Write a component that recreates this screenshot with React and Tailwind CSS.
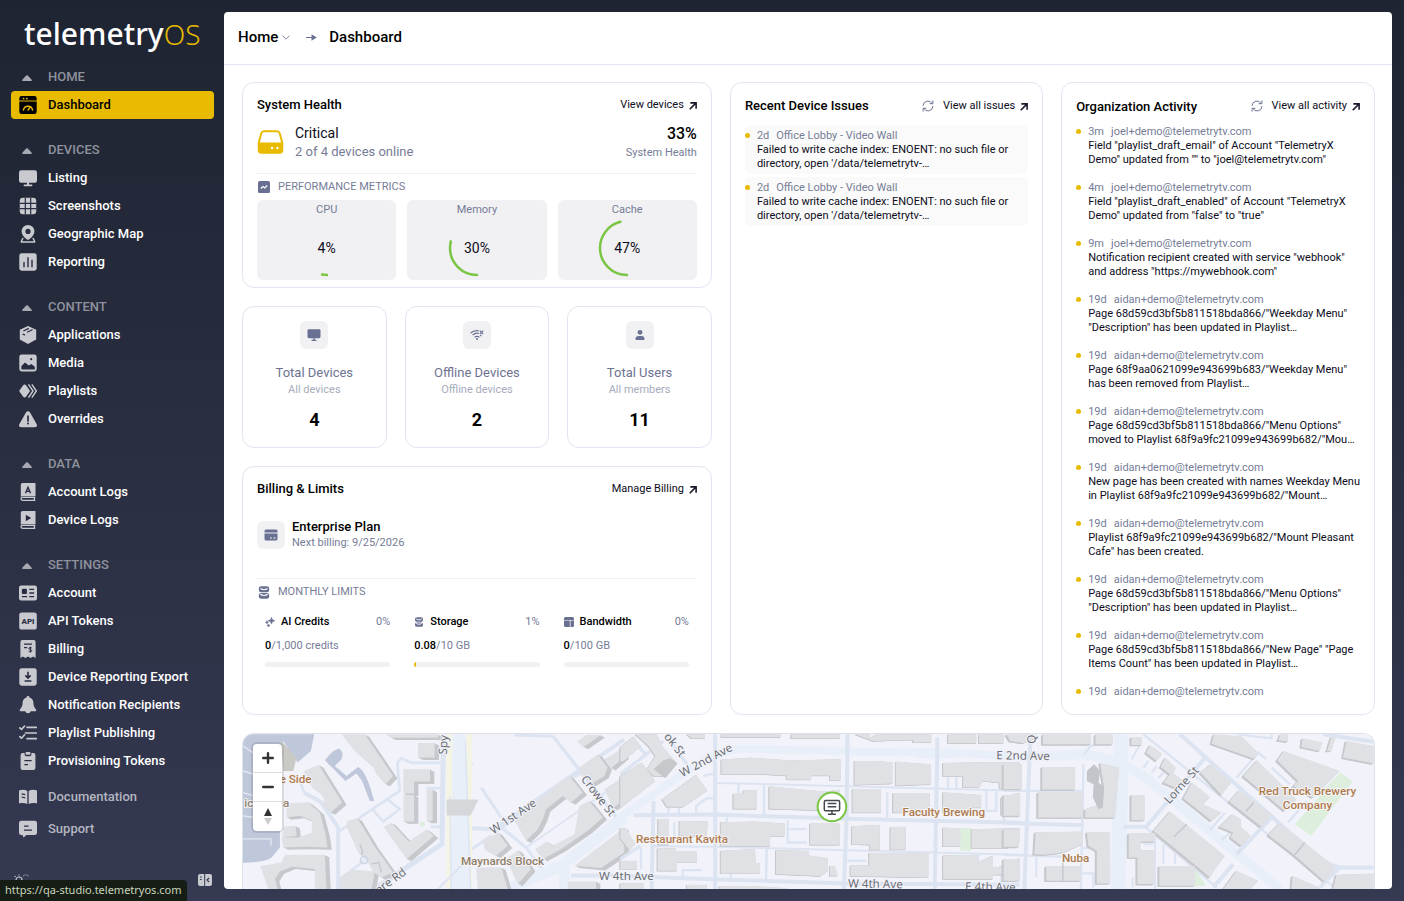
import React from "react";

const ACCENT = "#e8bb00";

/* ---------- sidebar icons, all on an 18x18 grid ---------- */

const KNOCK = "#282c40";

const icons = {
  dashboard: (
    <>
      <path d="M2.5 0h13A2.2 2.2 0 0 1 17.7 2.2V4.4H.3V2.2A2.2 2.2 0 0 1 2.5 0z" />
      <path d="M.3 5.6h17.4v10.2a2.2 2.2 0 0 1-2.2 2.2h-13a2.2 2.2 0 0 1-2.2-2.2z" />
      <circle cx="4.6" cy="2.6" r=".9" fill={ACCENT} />
      <circle cx="7.8" cy="2.6" r=".9" fill={ACCENT} />
      <path d="M4.4 14a4.7 4.7 0 0 1 9.2 0M9 14l2-2.6" fill="none" stroke={ACCENT} strokeWidth="1.4" strokeLinecap="round" />
    </>
  ),
  listing: (
    <>
      <rect x="0" y="1.2" width="18" height="12.6" rx="2.2" />
      <path d="M8 13h2v2.6h2.6a.8.8 0 0 1 0 1.6H5.4a.8.8 0 0 1 0-1.6H8z" />
    </>
  ),
  screenshots: (
    <>
      <rect x=".8" y=".8" width="16.4" height="16.4" rx="3" />
      <path d="M6.3.8v16.4M11.7.8v16.4M.8 6.3h16.4M.8 11.7h16.4" stroke={KNOCK} strokeWidth="1.2" />
    </>
  ),
  map: (
    <>
      <path d="M9 0a6.4 6.4 0 0 1 6.4 6.4c0 3.9-4.6 7.6-6.4 8.600C7.200 14 2.600 10.300 2.600 6.400A6.400 6.400 0 0 1 9 0z" />
      <circle cx="9" cy="6.4" r="2.6" fill={KNOCK} />
      <path d="M3.800 13.400l-1.600 3.600h13.600l-1.600-3.600" fill="none" stroke="currentColor" strokeWidth="1.400" strokeLinejoin="round" strokeLinecap="round" />
    </>
  ),
  reporting: (
    <>
      <rect x=".3" y=".3" width="17.4" height="17.400" rx="2.400" />
      <path d="M5 9.500v4.300M9 4.800v9M13 7.300v6.500" stroke={KNOCK} strokeWidth="1.400" strokeLinecap="round" />
    </>
  ),
  applications: (
    <>
      <path d="M9 0l8.200 3.800v9.800L9 18 .8 13.600V3.800z" strokeLinejoin="round" />
      <path d="M4.800 4.800l4.600-2.200M8.600 6l4.600-2.200M4 8.200l1.600.7" stroke={KNOCK} strokeWidth="1.200" fill="none" strokeLinecap="round" />
    </>
  ),
  media: (
    <>
      <rect x=".3" y=".5" width="17.400" height="17" rx="2.400" />
      <path d="M2.400 15.500v-3.600l3.600-3.400 3.800 3 2.600-1.600 3.400 2.800v2.800z" fill={KNOCK} />
      <circle cx="12.200" cy="5.200" r="1.100" fill={KNOCK} />
    </>
  ),
  playlists: (
    <>
      <path d="M5.600 2.600a1.500 1.500 0 0 1 1.400.6l3.600 5a1.300 1.300 0 0 1 0 1.600l-3.600 5a1.700 1.700 0 0 1-2.800 0l-3.600-5a1.300 1.300 0 0 1 0-1.600l3.600-5a1.500 1.500 0 0 1 1.400-.6z" />
      <path d="M9.800 2.800L14 9l-4.200 6.200M13.200 2.800L17.300 9l-4.100 6.200" fill="none" stroke="currentColor" strokeWidth="1.400" strokeLinecap="round" strokeLinejoin="round" />
    </>
  ),
  overrides: (
    <>
      <path d="M9 1.200c.8 0 1.500.4 1.900 1.100l6.800 11.900c.8 1.300-.2 3-1.700 3H2c-1.500 0-2.500-1.700-1.700-3L7.100 2.300C7.500 1.600 8.200 1.200 9 1.200z" />
      <path d="M9 6v5" stroke={KNOCK} strokeWidth="1.700" strokeLinecap="round" />
      <circle cx="9" cy="13.600" r="1" fill={KNOCK} />
    </>
  ),
  accountLogs: (
    <>
      <path d="M3.600 0H16.500v13.200H3.400a1.600 1.600 0 0 0-1.600.9V1.800A1.800 1.800 0 0 1 3.600 0z" />
      <path d="M16.300 14.400H3.500a1.400 1.400 0 0 0 0 2.900h12.800M15.400 14.400v2.900" fill="none" stroke="currentColor" strokeWidth="1.300" />
      <path d="M6.500 10.200L9 4.300l2.500 5.900M7.400 8.400h3.200" fill="none" stroke={KNOCK} strokeWidth="1.400" />
    </>
  ),
  deviceLogs: (
    <>
      <path d="M3.600 0H16.500v13.200H3.400a1.600 1.600 0 0 0-1.600.9V1.800A1.800 1.800 0 0 1 3.600 0z" />
      <path d="M16.300 14.400H3.500a1.400 1.400 0 0 0 0 2.900h12.800M15.400 14.400v2.900" fill="none" stroke="currentColor" strokeWidth="1.300" />
      <path d="M6.800 3.800l5.400 3.200-5.400 3.200z" fill={KNOCK} />
    </>
  ),
  account: (
    <>
      <rect x="0" y="1.600" width="18" height="14.800" rx="2.200" />
      <rect x="2.900" y="4.800" width="5" height="5.200" rx="1" fill={KNOCK} />
      <path d="M2.900 12.600h5.200M10.300 5.400h4.800M10.300 9h4.800M10.300 12.600h4.800" stroke={KNOCK} strokeWidth="1.300" />
    </>
  ),
  api: (
    <>
      <rect x=".2" y=".4" width="17.600" height="17.200" rx="2.600" />
      <text x="9" y="11.800" textAnchor="middle" fontFamily="Roboto, sans-serif" fontSize="8" fontWeight="800" fill={KNOCK}>API</text>
    </>
  ),
  billing: (
    <>
      <path d="M3.400 0h11.200a2 2 0 0 1 2 2v16l-2.500-1.600-2.500 1.600L9 16.400 6.400 18l-2.500-1.600L1.400 18V2a2 2 0 0 1 2-2z" />
      <path d="M5 4.200h8M5 7.600h3.200" stroke={KNOCK} strokeWidth="1.200" />
      <path d="M12.800 8c-.5-.5-3-.8-3 .5s3 .8 3 2.200-2.600 1.200-3.100.5M11.300 6.800v5.700" fill="none" stroke={KNOCK} strokeWidth="1" />
    </>
  ),
  exportReport: (
    <>
      <rect x=".3" y=".3" width="17.400" height="17.400" rx="2.400" />
      <path d="M9 3.800v5.600M6.400 7.400L9 10l2.600-2.600M5.600 13h6.800" fill="none" stroke={KNOCK} strokeWidth="1.600" />
    </>
  ),
  bell: (
    <path d="M9 0c.9 0 1.400.6 1.400 1.400 2.600.6 4 2.700 4 5.200 0 4 1.200 5.200 2.800 7.200.4.600 0 1.400-.8 1.400h-4.600a2.900 2.900 0 0 1-5.600 0H1.600c-.8 0-1.200-.8-.8-1.400 1.600-2 2.800-3.200 2.800-7.200 0-2.500 1.400-4.600 4-5.200C7.600.6 8.100 0 9 0z" />
  ),
  checklist: (
    <path d="M.8 3.800l1.700 1.600L5.600 2M.8 12.600l1.700 1.600 3.100-3.400M8 3.400h9.400M6.400 9h11M8 14.600h9.400" fill="none" stroke="currentColor" strokeWidth="1.600" strokeLinecap="round" strokeLinejoin="round" />
  ),
  clipboard: (
    <>
      <path d="M3.600 1h2v1.600A1.600 1.600 0 0 0 7.200 4.200h3.600a1.600 1.600 0 0 0 1.600-1.600V1h2a2 2 0 0 1 2 2v13a2 2 0 0 1-2 2H3.600a2 2 0 0 1-2-2V3a2 2 0 0 1 2-2z" />
      <rect x="6.600" y="0" width="4.800" height="2.800" rx=".8" />
      <path d="M5.400 8.600h7.200M5.400 12.600h3.600" stroke={KNOCK} strokeWidth="1.300" />
    </>
  ),
  book: (
    <>
      <path d="M0 2.400c3-.9 6-.7 8.300.5v13.200C6 15 3 14.800 0 15.600zM9.700 2.900C12 1.700 15 1.500 18 2.400v13.200c-3-.8-6-.6-8.300.5z" />
      <path d="M2.600 5.800l3.600.8M2.600 9l3.600.8" stroke={KNOCK} strokeWidth="1.200" />
    </>
  ),
  support: (
    <>
      <path d="M2.200.8h13.600A2.200 2.200 0 0 1 18 3v9.800a2.200 2.200 0 0 1-2.200 2.200H7.400L4.600 17.600 3.400 15H2.200A2.200 2.200 0 0 1 0 12.800V3A2.200 2.200 0 0 1 2.200.8z" />
      <path d="M5 6.200h4.600M5 10.200h8" stroke={KNOCK} strokeWidth="1.300" />
    </>
  ),
};

function NavIcon({ name }) {
  return (
    <svg viewBox="0 0 18 18" className="size-[18px] shrink-0" fill="currentColor" aria-hidden="true">
      {icons[name]}
    </svg>
  );
}

const sections = [
  { title: "HOME", items: [["dashboard", "Dashboard"]] },
  {
    title: "DEVICES",
    items: [["listing", "Listing"], ["screenshots", "Screenshots"], ["map", "Geographic Map"], ["reporting", "Reporting"]],
  },
  {
    title: "CONTENT",
    items: [["applications", "Applications"], ["media", "Media"], ["playlists", "Playlists"], ["overrides", "Overrides"]],
  },
  { title: "DATA", items: [["accountLogs", "Account Logs"], ["deviceLogs", "Device Logs"]] },
  {
    title: "SETTINGS",
    items: [
      ["account", "Account"],
      ["api", "API Tokens"],
      ["billing", "Billing"],
      ["exportReport", "Device Reporting Export"],
      ["bell", "Notification Recipients"],
      ["checklist", "Playlist Publishing"],
      ["clipboard", "Provisioning Tokens"],
    ],
  },
];

function Sidebar() {
  return (
    <aside className="flex w-56 shrink-0 flex-col text-[13px] font-medium text-white">
      <div className="flex h-[63px] items-baseline pt-3 pl-6 font-['Noto_Sans'] text-[30px] leading-[44px]">
        <span>telemetry</span>
        <span className="text-[28px] font-light text-[#e8bb00]">OS</span>
      </div>
      <nav className="flex flex-col gap-[17px] pr-[10px] pl-[11px]">
        {sections.map((section) => (
          <div key={section.title}>
            <button className="flex h-7 w-full items-center text-[#8f929c]">
              <span className="flex w-[37px] pl-[11px] pt-0.5">
                <svg viewBox="0 0 10 6" className="h-1.5 w-2.5" fill="#a8aab3" aria-hidden="true">
                  <path d="M4.200.6a1.200 1.200 0 0 1 1.600 0L9.700 4.800c.4.500.1 1.200-.5 1.200H.8C.2 6-.1 5.300.3 4.800z" />
                </svg>
              </span>
              {section.title}
            </button>
            {section.items.map(([icon, label]) => (
              <a
                key={label}
                href="#"
                className={
                  label === "Dashboard"
                    ? "flex h-7 items-center gap-[11px] rounded bg-[#e8bb00] px-2 text-black"
                    : "flex h-7 items-center gap-[11px] px-2"
                }
              >
                <span className={label === "Dashboard" ? "text-black" : "text-[#c9cad0]"}>
                  <NavIcon name={icon} />
                </span>
                {label}
              </a>
            ))}
          </div>
        ))}
      </nav>
      <div className="flex flex-col gap-1 pt-2 pl-[11px] text-[#b4b6c0]">
        <a href="#" className="flex h-7 items-center gap-[11px] px-2">
          <span className="text-[#c9cad0]"><NavIcon name="book" /></span>
          Documentation
        </a>
        <a href="#" className="flex h-7 items-center gap-[11px] px-2">
          <span className="text-[#c9cad0]"><NavIcon name="support" /></span>
          Support
        </a>
      </div>
      <div className="mt-auto flex items-center justify-between pr-3 pb-[14px] pl-3 text-[#c9cad0]">
        <button aria-label="Theme">
          <svg viewBox="0 0 18 14" className="h-3.5 w-[18px]" fill="none" stroke="currentColor" strokeWidth="1.200" aria-hidden="true">
            <circle cx="7" cy="7" r="3" />
            <path d="M2.600 3l.9.900M7 1.500v1" />
            <path d="M11 3.400c1-2 3.500-2.400 5.500 0" opacity=".5" />
          </svg>
        </button>
        <button aria-label="Collapse sidebar">
          <svg viewBox="0 0 14 12" className="h-3 w-3.5" fill="currentColor" aria-hidden="true">
            <path d="M2 0h4.200v12H2a2 2 0 0 1-2-2V2a2 2 0 0 1 2-2zM7.200 0H12a2 2 0 0 1 2 2v8a2 2 0 0 1-2 2H7.200z" />
            <path d="M2 3h1.600M2 5.500h1.600M11 4L9 6l2 2" stroke="#32364d" strokeWidth="1.200" fill="none" />
          </svg>
        </button>
      </div>
    </aside>
  );
}

/* ---------- small shared pieces ---------- */

function MoreLink({ children }) {
  return (
    <a href="#" className="flex items-center gap-[5px] text-[11px] text-[#0c0c20]">
      {children}
      <svg viewBox="0 0 9 9" className="mt-0.5 size-2" fill="none" stroke="#1b1b2e" strokeWidth="1.800" aria-hidden="true">
        <path d="M1.500 1h6.500v6.500M8 1L.8 8.200" />
      </svg>
    </a>
  );
}

function RefreshButton() {
  return (
    <button aria-label="Refresh" className="text-[#6f7592]">
      <svg viewBox="0 0 12 12" className="size-3" fill="none" stroke="currentColor" strokeWidth="1" strokeLinecap="round" strokeLinejoin="round" aria-hidden="true">
        <path d="M1 5.500A5 5 0 0 1 10.300 3.500M11 6.500A5 5 0 0 1 1.700 8.500" />
        <path d="M10.900.8v2.900H8M1.100 11.200V8.300H4" />
      </svg>
    </button>
  );
}

function Card({ className, children }) {
  return <section className={`rounded-xl border border-[#e3e3f1] bg-white ${className}`}>{children}</section>;
}

function IconTile({ children }) {
  return (
    <span className="flex size-7 shrink-0 items-center justify-center rounded-md bg-[#f1f1f3] text-[#6a7092]">
      {children}
    </span>
  );
}

function DatabaseIcon({ className }) {
  return (
    <svg viewBox="0 0 12 14" className={className} fill="#6a7092" aria-hidden="true">
      <rect x=".4" y=".3" width="11.200" height="6.500" rx="2.600" />
      <rect x=".4" y="7.600" width="11.200" height="6.200" rx="2.600" />
      <path d="M2.200 2.800c2 1.400 5.600 1.400 7.600 0M2 8.900c2.400 1.600 5.600 1.600 8 0" stroke="#fff" strokeWidth="1.300" fill="none" />
    </svg>
  );
}

/* ---------- system health ---------- */

function Gauge({ label, value }) {
  return (
    <div className="flex flex-col items-center rounded-md bg-[#f1f1f3] py-0.5">
      <span className="text-[11px] leading-4 text-[#767c97]">{label}</span>
      <div className="grid size-[60px] place-items-center">
        <svg viewBox="0 0 60 60" className="col-start-1 row-start-1 size-[60px] rotate-90" aria-hidden="true">
          <circle
            cx="30"
            cy="30"
            r="27"
            fill="none"
            stroke="#7ac544"
            strokeWidth="2.500"
            strokeLinecap="round"
            pathLength="100"
            strokeDasharray={`${value - 1} 100`}
          />
        </svg>
        <span className="col-start-1 row-start-1 text-[14px] text-[#0c0c20]">{value}%</span>
      </div>
    </div>
  );
}

function SystemHealth() {
  return (
    <Card className="px-[14px] pt-[14px] pb-[7px]">
      <div className="flex h-4 items-center justify-between">
        <h2 className="text-[13px] font-medium">System Health</h2>
        <MoreLink>View devices</MoreLink>
      </div>
      <div className="mt-[9px] flex items-center justify-between border-b border-[#f1f1f3] pb-[11px]">
        <div className="flex items-center gap-[11px]">
          <svg viewBox="0 0 26 24" className="h-6 w-[27px]" aria-hidden="true">
            <path d="M6.500 1.200h13c1.300 0 2.300.8 2.700 2L24.800 13v7a2.800 2.800 0 0 1-2.800 2.800H4A2.800 2.800 0 0 1 1.200 20v-7L3.800 3.200c.4-1.200 1.400-2 2.700-2z" fill="#fff" stroke={ACCENT} strokeWidth="2" />
            <path d="M1 12.500h24V20a3 3 0 0 1-3 3H4a3 3 0 0 1-3-3z" fill={ACCENT} />
            <circle cx="14.500" cy="18" r="1.200" fill="#fff" />
            <circle cx="20" cy="18" r="1.200" fill="#fff" />
          </svg>
          <div>
            <p className="text-[14px] leading-5 text-[#0c0c20]">Critical</p>
            <p className="text-[13px] leading-[18px] text-[#767c97]">2 of 4 devices online</p>
          </div>
        </div>
        <div className="text-right">
          <p className="pt-0.5 text-[16px] leading-5 font-medium">33%</p>
          <p className="text-[11px] leading-[18px] text-[#767c97]">System Health</p>
        </div>
      </div>
      <div className="mt-[5px] flex h-4 items-center gap-2 pl-px text-[11px] text-[#767c97]">
        <svg viewBox="0 0 12 12" className="size-3" aria-hidden="true">
          <rect width="12" height="12" rx="1.500" fill="#6a7092" />
          <path d="M2.800 7.500l2.200-2 1.800 1.400 2.400-2.400" fill="none" stroke="#fff" strokeWidth="1.200" />
        </svg>
        PERFORMANCE METRICS
      </div>
      <div className="mt-[5px] grid grid-cols-3 gap-[11px]">
        <Gauge label="CPU" value={4} />
        <Gauge label="Memory" value={30} />
        <Gauge label="Cache" value={47} />
      </div>
    </Card>
  );
}

/* ---------- stat tiles ---------- */

const stats = [
  {
    title: "Total Devices",
    sub: "All devices",
    value: 4,
    icon: (
      <>
        <rect x=".5" y="1.200" width="13" height="9" rx="1.400" fill="currentColor" />
        <path d="M7 10v2.300M4.600 12.400h4.800" stroke="currentColor" strokeWidth="1.300" />
      </>
    ),
  },
  {
    title: "Offline Devices",
    sub: "Offline devices",
    value: 2,
    icon: (
      <>
        <path d="M.6 5A9.500 9.500 0 0 1 8.600 2.700M2.600 7.200A6.800 6.800 0 0 1 8.800 5.300M4.600 9.200a4.200 4.200 0 0 1 4.800 0M10 7.200a7 7 0 0 1 1.500.9M9.800 2.700l3.400 3.400M13.200 2.700L9.800 6.100" fill="none" stroke="currentColor" strokeWidth="1.200" />
        <circle cx="7" cy="11" r="1" fill="currentColor" />
      </>
    ),
  },
  {
    title: "Total Users",
    sub: "All members",
    value: 11,
    icon: (
      <>
        <circle cx="7" cy="4.300" r="2.400" fill="currentColor" />
        <path d="M2.600 12v-1.400C2.600 8.800 4 8 5.600 8h2.800c1.600 0 3 .8 3 2.600V12z" fill="currentColor" />
      </>
    ),
  },
];

function StatTile({ stat }) {
  return (
    <Card className="flex flex-col items-center pt-[14px] pb-[15px] text-center">
      <IconTile>
        <svg viewBox="0 0 14 14" className="size-3.5" aria-hidden="true">{stat.icon}</svg>
      </IconTile>
      <p className="mt-[15px] text-[13px] leading-[18px] text-[#6d7390]">{stat.title}</p>
      <p className="text-[11px] leading-4 text-[#a7abbc]">{stat.sub}</p>
      <p className="mt-2.5 text-[18px] leading-6 font-bold">{stat.value}</p>
    </Card>
  );
}

/* ---------- billing ---------- */

const limits = [
  {
    name: "AI Credits",
    used: "0",
    total: "/1,000 credits",
    percent: 0,
    icon: (
      <svg viewBox="0 0 10 10" className="size-2.5" fill="#6a7092" aria-hidden="true">
        <path d="M6.500.3l1 2.400 2.400 1-2.400 1-1 2.400-1-2.400-2.400-1 2.400-1zM2 3.600l.5 1.200 1.200.5-1.200.5L2 7 1.500 5.800.3 5.300l1.200-.5zM3.400 7l.6 1 1 .5-1 .5-.6 1-.5-1-1-.5 1-.5z" stroke="#6a7092" strokeWidth=".5" />
      </svg>
    ),
  },
  { name: "Storage", used: "0.08", total: "/10 GB", percent: 1, icon: <DatabaseIcon className="h-2.5 w-2.5" /> },
  {
    name: "Bandwidth",
    used: "0",
    total: "/100 GB",
    percent: 0,
    icon: (
      <svg viewBox="0 0 10 10" className="size-2.5" fill="#6a7092" aria-hidden="true">
        <path d="M1.500 0h7A1.500 1.500 0 0 1 10 1.500V3H0V1.500A1.500 1.500 0 0 1 1.500 0zM0 3.600h5.800v6.400H1.500A1.500 1.500 0 0 1 0 8.500zM6.500 3.600H10v4.900A1.500 1.500 0 0 1 8.500 10h-2z" />
      </svg>
    ),
  },
];

function Billing() {
  return (
    <Card className="h-[249px] p-[14px]">
      <div className="flex h-4 items-center justify-between">
        <h2 className="text-[13px] font-medium">Billing &amp; Limits</h2>
        <MoreLink>Manage Billing</MoreLink>
      </div>
      <div className="mt-[22px] flex items-center gap-[7px] border-b border-[#f1f1f3] pb-[27px]">
        <IconTile>
          <svg viewBox="0 0 14 12" className="h-3 w-3.5" fill="currentColor" aria-hidden="true">
            <path d="M2 .5h10a1.500 1.500 0 0 1 1.500 1.500v1H.5V2A1.500 1.500 0 0 1 2 .5zM.5 5h13v5a1.500 1.500 0 0 1-1.500 1.500H2A1.500 1.500 0 0 1 .5 10z" />
            <path d="M.5 3h13v2H.5z" opacity=".5" />
            <path d="M6 9h1.800M9.500 9h2" stroke="#fff" strokeWidth="1" />
          </svg>
        </IconTile>
        <div>
          <p className="text-[13px] leading-4 font-medium">Enterprise Plan</p>
          <p className="text-[11px] leading-4 text-[#767c97]">Next billing: 9/25/2026</p>
        </div>
      </div>
      <div className="mt-[5px] flex h-4 items-center gap-2 pl-px text-[11px] text-[#767c97]">
        <DatabaseIcon className="h-[13px] w-3" />
        MONTHLY LIMITS
      </div>
      <div className="mt-[14px] grid grid-cols-3 gap-6 px-2">
        {limits.map((limit) => (
          <div key={limit.name} className="text-[11px] leading-4">
            <div className="flex items-center gap-1.5">
              {limit.icon}
              <span className="font-medium">{limit.name}</span>
              <span className="ml-auto text-[#767c97]">{limit.percent}%</span>
            </div>
            <p className="mt-2 text-[#767c97]">
              <span className="font-medium text-black">{limit.used}</span>
              {limit.total}
            </p>
            <div className="mt-2 h-[5px] overflow-hidden rounded-full bg-[#f1f1f3]">
              <div className="h-full bg-[#e8bb00]" style={{ width: `${limit.percent}%` }} />
            </div>
          </div>
        ))}
      </div>
    </Card>
  );
}

/* ---------- feeds ---------- */

const issues = [
  { age: "2d", who: "Office Lobby - Video Wall", text: "Failed to write cache index: ENOENT: no such file or\ndirectory, open '/data/telemetrytv-…" },
  { age: "2d", who: "Office Lobby - Video Wall", text: "Failed to write cache index: ENOENT: no such file or\ndirectory, open '/data/telemetrytv-…" },
];

const JOEL = "joel+demo@telemetrytv.com";
const AIDAN = "aidan+demo@telemetrytv.com";

const activity = [
  { age: "3m", who: JOEL, text: 'Field "playlist_draft_email" of Account "TelemetryX\nDemo" updated from "" to "joel@telemetrytv.com"' },
  { age: "4m", who: JOEL, text: 'Field "playlist_draft_enabled" of Account "TelemetryX\nDemo" updated from "false" to "true"' },
  { age: "9m", who: JOEL, text: 'Notification recipient created with service "webhook"\nand address "https://mywebhook.com"' },
  { age: "19d", who: AIDAN, text: 'Page 68d59cd3bf5b811518bda866/"Weekday Menu"\n"Description" has been updated in Playlist…' },
  { age: "19d", who: AIDAN, text: 'Page 68f9aa0621099e943699b683/"Weekday Menu"\nhas been removed from Playlist…' },
  { age: "19d", who: AIDAN, text: 'Page 68d59cd3bf5b811518bda866/"Menu Options"\nmoved to Playlist 68f9a9fc21099e943699b682/"Mou…' },
  { age: "19d", who: AIDAN, text: 'New page has been created with names Weekday Menu\nin Playlist 68f9a9fc21099e943699b682/"Mount…' },
  { age: "19d", who: AIDAN, text: 'Playlist 68f9a9fc21099e943699b682/"Mount Pleasant\nCafe" has been created.' },
  { age: "19d", who: AIDAN, text: 'Page 68d59cd3bf5b811518bda866/"Menu Options"\n"Description" has been updated in Playlist…' },
  { age: "19d", who: AIDAN, text: 'Page 68d59cd3bf5b811518bda866/"New Page" "Page\nItems Count" has been updated in Playlist…' },
  { age: "19d", who: AIDAN, text: "" },
];

function FeedItem({ item, className }) {
  return (
    <li className={`flex gap-[7px] text-[11px] leading-[14px] ${className}`}>
      <span className="mt-1 size-[5px] shrink-0 rounded-full bg-[#e8bb00]" />
      <div className="min-w-0">
        <p className="flex gap-[7px] text-[#767c97]">
          <span>{item.age}</span>
          <span>{item.who}</span>
        </p>
        <p className="whitespace-pre text-[#0c0c20]">{item.text}</p>
      </div>
    </li>
  );
}

function RecentIssues() {
  return (
    <Card className="px-[14px] pt-[15px] pb-[14px]">
      <div className="flex h-4 items-center justify-between">
        <h2 className="text-[13px] font-medium">Recent Device Issues</h2>
        <div className="flex items-center gap-[9px]">
          <RefreshButton />
          <MoreLink>View all issues</MoreLink>
        </div>
      </div>
      <ul className="mt-[11px] flex flex-col gap-[3px]">
        {issues.map((item, i) => (
          <FeedItem key={i} item={item} className="rounded-md bg-[#fafafa] pt-1 pb-[3px]" />
        ))}
      </ul>
    </Card>
  );
}

function OrganizationActivity() {
  return (
    <Card className="flex flex-col px-[14px] pt-[15px] pb-[14px]">
      <div className="flex h-4 items-center justify-between">
        <h2 className="pt-0.5 text-[13px] font-medium">Organization Activity</h2>
        <div className="flex items-center gap-[9px]">
          <RefreshButton />
          <MoreLink>View all activity</MoreLink>
        </div>
      </div>
      <ul className="mt-[11px] flex h-0 grow flex-col gap-[14px] overflow-hidden">
        {activity.map((item, i) => (
          <FeedItem key={i} item={item} className="shrink-0" />
        ))}
      </ul>
    </Card>
  );
}

/* ---------- map, drawn at three units per pixel in three tiles ---------- */

function Buildings({ shapes, dx, dy }) {
  const d = shapes.join(" ");
  return (
    <>
      {[1, 0.75, 0.5, 0.25].map((k) => (
        <path key={k} d={d} fill="#c6c8cc" transform={`translate(${dx * k} ${dy * k})`} />
      ))}
      <path d={d} fill="#dfe1e4" />
    </>
  );
}

const westBuildings = [
  "M350 40H420L505 165 482 190 455 160 445 138 392 92z",
  "M236 150L282 132 352 245 318 275 288 250 300 238 285 215 262 200z",
  "M536 145H616V182H568V218H536z",
  "M536 222H568V302H536z",
  "M606 206H624V300H606z",
  "M580 66H630V110H580z",
  "M484 40H640V50H500z",
  "M368 300L398 292 430 345 448 375 505 455 470 470 445 452 430 425 400 395 380 350 365 318z",
  "M476 318L500 306 552 362 605 326 628 345 546 415z",
  "M184 248L250 244 285 275 302 340 308 380 240 378 175 380 170 350 220 350 260 335 262 300 225 285 185 290z",
  "M175 318L212 315 215 345 172 350z",
  "M106 436L170 425 180 402H300L305 505H270V445L200 438 165 452 150 475 158 505H130z",
  "M345 470L380 446 450 452 440 505H345z",
  "M1065 140L1120 100 1150 140 1140 165 1100 190 1070 160z",
  "M1058 62L1085 42H1130L1078 78z",
  "M1142 118L1200 75V108L1160 142z",
  "M1140 205L1200 165V235L1165 262z",
  "M995 195L1035 165 1075 215 1040 245 1015 225 965 265 955 295 940 325 905 360 870 300z",
  "M932 385L965 362 985 375 1050 340 1065 255 1095 240 1135 290 1090 330 1010 385 955 415z",
  "M775 362L820 335 850 375 815 405 780 385z",
  "M845 415L880 388 920 445 880 490z",
  "M755 440L830 440 850 505H760z",
  "M1050 435L1200 320V395L1130 442z",
  "M1030 482H1115V505H1030z",
];

const centreBuildings = [
  "M0 78L40 46 62 75 10 120H0z",
  "M46 40H110L130 80 170 125 140 165H100L80 145 105 105 85 75z",
  "M0 165L65 125 105 180 0 262z",
  "M126 235L228 162 262 208 190 258H140z",
  "M200 40H255V52H215z",
  "M304 40H482V48H304z",
  "M514 40H660V52H514z",
  "M304 116L390 110 510 118 662 115V178H630V164H574V176H500V164L435 160H304z",
  "M340 218H370V208H410V264H340z",
  "M448 196L550 206 620 212 660 206V270L448 264z",
  "M704 120H768L818 124V188L704 192z",
  "M828 122L934 130V190L828 194z",
  "M706 40H750V52L768 40H935V64H880V56L760 60z",
  "M970 126L1090 124H1200V202H1140V185L1090 180 1080 198H1030V166H970z",
  "M985 40H1070V66H985z M1078 40H1152V66H1078z",
  "M698 204H784V275H698z",
  "M820 216H930V275H820z",
  "M970 214L1085 222V260H1052V275H970z",
  "M1145 230L1200 215V282H1145z",
  "M114 294H146V372H114z M178 300L264 302 260 345H178z",
  "M302 304L408 302 494 308V346H450V376H302z",
  "M570 308H660V372H570z",
  "M696 316L780 312V386H750V372L696 370z",
  "M812 318H858V386H812z",
  "M970 320L1022 322V376H970z M1056 325L1200 322V365L1165 382H1056z",
  "M0 322L16 322 46 368 28 388 0 352z",
  "M112 382H168V392H230V425H170V450H112z",
  "M302 390L405 384 408 426 420 428V458H302z",
  "M468 388L566 390V404L624 412V450L602 466 468 460z",
  "M630 435L645 435 654 465H630z",
  "M748 396H926V470L692 466V434H748z",
  "M970 404L1075 402V425L1120 404V438H1138L1200 412V480H1162V462H1120V475H970z",
  "M200 492H260V505H200z M298 496H400L500 502V508H298z M0 488H70V505H0z",
  "M0 420H50V446H0z",
];

const eastBuildings = [
  "M8 40H98V50L60 66 20 60z",
  "M118 40H262V70H118z M276 40H328V70H276z M384 48H416V72H384z",
  "M0 130H55V204H0z",
  "M116 138H215V206H116z",
  "M104 214H238V290H104z",
  "M290 126L348 140 335 290H245V265L290 250 302 200z",
  "M384 222H424V298H384z",
  "M440 72L478 98 460 120 428 95z",
  "M486 110L518 140 510 158 542 180 515 200 480 185 500 160 472 138z",
  "M622 130L684 185 655 222 592 155z",
  "M566 184L620 228 600 250 655 275 625 300 540 232z",
  "M632 40L715 46 765 95 755 114 625 68z",
  "M762 118L880 235 845 270 720 165z",
  "M842 90L1010 150 930 230 870 195 885 180 822 118z",
  "M898 52L958 64 950 90 895 78z M832 40H855V62L825 58z M985 48L998 48 985 90 972 90z",
  "M1030 60L1112 75V128L1020 110z",
  "M708 208L805 280 775 318 678 242z",
  "M688 280L714 295V318L742 345 715 375 682 350 690 335 648 318z",
  "M500 272L665 405 635 445 620 470 590 445 450 330z",
  "M828 308L880 345 905 365 998 440 965 482 870 400 795 342z",
  "M96 334L236 332V370L180 395 120 402 92 400z",
  "M250 334H320V488H280V390L255 375z",
  "M376 338L455 336V362H412V388H452V490H402V410H376z",
  "M128 436H232V480H128z",
  "M468 436H575V495H468z",
  "M0 325H46V378H0z M0 415H45V480H0z M0 222H50V285H0z",
  "M700 450L765 480 740 505H660z M868 465L950 500V505H865z M1000 462L1112 458V505H990z",
];

function StreetMap() {
  return (
    <svg viewBox="0 0 3399 468" preserveAspectRatio="xMidYMin slice" className="block h-full w-full" fill="none" role="img" aria-label="Device map">
      <rect width="3399" height="468" fill="#f2f3fa" />

      {/* west tile */}
      <g transform="translate(-54 -39)">
        <path d="M54 40H268L258 90 218 125 175 60 165 120V380L140 410Q120 425 54 426z" fill="#bfc7da" />
        <path d="M300 118Q330 80 345 84 358 96 350 115L330 135 365 165 400 138Q425 150 448 240L435 240 412 180 395 158 362 180z" fill="#bfc7da" />
        <path d="M168 58L215 110 205 150 175 150z" fill="#c9cac5" />
        <path d="M54 75L88 98M54 150L88 160M54 215L88 225M54 285L88 290M54 354H138V375" stroke="#e4e8f2" strokeWidth="4" />
        <path d="M676 40V505M732 40V505" stroke="#f4f4e4" strokeWidth="22" />
        <path d="M684 40H724L740 505H678z" fill="#e9eff9" />
        <g stroke="#dce3f1">
          <path d="M656 60L652 370L500 470 450 505" strokeWidth="15" />
          <path d="M742 322L808 325 1200 55M808 335L1050 165 1200 90" strokeWidth="12" />
          <path d="M985 45L1052 130 1180 295" strokeWidth="10" />
          <path d="M820 312L905 380 960 455M770 200L830 290M742 385L800 345M870 42L985 46" strokeWidth="9" />
          <path d="M905 380L1200 175M640 505L720 425" strokeWidth="6" />
          <path d="M238 215L290 245 340 320V505" strokeWidth="12" />
          <path d="M345 330L525 210 518 125 530 112 560 126H656M440 262L475 302 525 265 488 235M605 202H650M618 318H650M345 475L418 420" strokeWidth="8" />
          <path d="M238 215L225 180" strokeWidth="8" />
          <path d="M676 225L680 505M722 60L738 505M740 128H748" strokeWidth="4" />
          <path d="M1040 464H1200" strokeWidth="12" />
        </g>
        <path d="M850 505L1010 435 1200 290M1020 440V505" stroke="#e9eff9" strokeWidth="34" />
        <Buildings shapes={westBuildings} dx={13} dy={7} />
        <path d="M666 236H762L738 284H666z" fill="#d5d7da" />
        <circle cx="418" cy="418" r="11" stroke="#cdd6e6" strokeWidth="5" />
        <path d="M405 370Q420 400 408 400M440 430L462 425 470 455" stroke="#c3c5ca" strokeWidth="4" />
        <rect x="585" y="303" width="15" height="14" fill="#ddefdc" />
      </g>

      {/* centre tile */}
      <g transform="translate(1134 -39)">
        <path d="M0 290L200 150Q300 80 380 84L860 95 900 92 1010 95 1200 108" stroke="#e9eff9" strokeWidth="24" />
        <path d="M850 95L900 85H1000L1040 100 1000 112H900z" fill="#e9eff9" />
        <g stroke="#dce3f1">
          <path d="M285 40V505M683 40L680 290 672 505M953 50L945 505M100 240L94 505" strokeWidth="12" />
          <path d="M40 283L280 281 680 294 1200 306M0 465L290 476 680 488 1200 492" strokeWidth="12" />
          <path d="M290 186L680 196 1200 210M100 376L290 378 680 388 1200 402" strokeWidth="6" />
          <path d="M250 165L285 157M355 186V218M432 190V280M228 275V255L260 232H282M145 255V280M176 258V280M320 290V305" strokeWidth="7" />
          <path d="M503 298V365H560M503 325H560M440 385L438 476M188 468V448H245M682 420H738M332 458V472M62 380V445M162 305V350" strokeWidth="7" />
          <path d="M802 214V290M985 170V205M1010 170V205M1100 210V270H1130V212M1145 440V500M1075 400V425M1153 285V305" strokeWidth="7" />
          <path d="M0 160L130 60M40 60L80 105M150 60L200 130M0 415L60 375" strokeWidth="10" />
        </g>
        <path d="M1022 322H1054V390H1022z" fill="#ddefdc" />
        <Buildings shapes={centreBuildings} dx={-3} dy={2} />
        <path d="M100 145L130 118 150 112 172 128 135 172z" fill="#c6c8cc" />
      </g>

      {/* east tile */}
      <g transform="translate(2286 -39)">
        <path d="M48 108L240 100Q330 110 420 165L560 280 830 505" stroke="#e9eff9" strokeWidth="30" />
        <path d="M354 40L344 505" stroke="#e9eff9" strokeWidth="46" />
        <g stroke="#dce3f1">
          <path d="M80 60L62 505M0 306L240 313M360 318H428L610 105M1112 440H1010Q960 430 915 385L530 40M700 400L810 285M630 500L690 430M950 500L1010 440" strokeWidth="12" />
          <path d="M0 210H238M0 402L180 408M240 130L232 505M428 320L640 500M420 40L1000 505M240 382H280M235 458H270V500" strokeWidth="7" />
          <path d="M700 170L765 95 790 115M805 140L860 190M855 305L910 240M620 328L665 275M655 358L680 335M420 140L435 120M445 155L460 135M465 172L480 155" strokeWidth="7" />
          <path d="M240 100L262 75 328 55M385 115L410 70M455 350V505M480 370V430M515 400V430M420 370H450M388 470V500M98 408V470M700 40L805 52V40" strokeWidth="6" />
          <path d="M960 40L1112 62" strokeWidth="12" />
        </g>
        <path d="M1012 155L1048 182 925 345 875 310z" fill="#ddefdc" />
        <path d="M558 450L575 445 610 495 560 498z" fill="#ddefdc" />
        <Buildings shapes={eastBuildings} dx={-6} dy={4} />
        <path d="M272 130L290 150 285 185 302 200 298 260 285 265 268 230 270 190 250 180V150z" fill="#c3c5ca" />
        <path d="M1012 155L1048 182 990 260 940 225z" fill="#ddefdc" opacity=".7" />
        <path d="M550 310L512 348M752 245L728 272M905 365L875 402M178 410V480" stroke="#c3c5ca" strokeWidth="4" />
      </g>

      {/* street names */}
      <g fontFamily="'Noto Sans', sans-serif" fontSize="35" fill="#6b6d73" stroke="#f2f3fa" strokeWidth="6" paintOrder="stroke" strokeLinejoin="round">
        <text transform="translate(612 62) rotate(-86)">Spy</text>
        <text transform="translate(752 302) rotate(-34)">W 1st Ave</text>
        <text transform="translate(1014 136) rotate(52)">Crowe St</text>
        <text transform="translate(1070 440)">W 4th Ave</text>
        <text transform="translate(408 482) rotate(-36)">ere Rd</text>
        <text transform="translate(1264 8) rotate(52)">ok St</text>
        <text transform="translate(1320 130) rotate(-28)">W 2nd Ave</text>
        <text transform="translate(2264 76) rotate(1)">E 2nd Ave</text>
        <text transform="translate(1818 461) rotate(1)">W 4th Ave</text>
        <text transform="translate(2170 470) rotate(1)">E 4th Ave</text>
        <text transform="translate(2381 30) rotate(-86)">Q</text>
        <text transform="translate(2784 212) rotate(-48)">Lorne St</text>
      </g>

      {/* places */}
      <g fontFamily="Roboto, sans-serif" fontSize="35" fontWeight="500" fill="#ad7b52" stroke="#f6f4f4" strokeWidth="6" paintOrder="stroke" strokeLinejoin="round">
        <text x="206" y="147" textAnchor="end">e Side</text>
        <text x="4" y="220" fill="#8f8577">ic</text>
        <text x="120" y="220" fill="#8f8577">a</text>
        <text x="655" y="394" fill="#8f7f6c">Maynards Block</text>
        <text x="1181" y="329">Restaurant Kavita</text>
        <text x="1982" y="246">Faculty Brewing</text>
        <text x="2461" y="384">Nuba</text>
        <text x="3199" y="183" textAnchor="middle">Red Truck Brewery</text>
        <text x="3199" y="226" textAnchor="middle">Company</text>
      </g>

      {/* device marker */}
      <g transform="translate(1770 219)">
        <circle r="43" fill="#fff" stroke="#7ac544" strokeWidth="6" />
        <path d="M-19-19h38a4 4 0 0 1 4 4V8a4 4 0 0 1-4 4h-38a4 4 0 0 1-4-4v-23a4 4 0 0 1 4-4zM-13-10h26M-13 0h26M0 12v9M-12 22h24" stroke="#44474f" strokeWidth="4.500" />
      </g>
    </svg>
  );
}

function DeviceMap() {
  return (
    <section className="relative min-h-[156px] grow overflow-hidden rounded-t-xl border border-b-0 border-[#dfe1ea]">
      <StreetMap />
      <div className="absolute top-[10px] left-2.5 flex w-[29px] flex-col divide-y divide-[#dddddd] rounded bg-white shadow-[0_0_0_2px_rgba(0,0,0,0.1)]">
        <button aria-label="Zoom in" className="flex h-[29px] items-center justify-center">
          <svg viewBox="0 0 12 12" className="size-3" stroke="#333" strokeWidth="2.400" strokeLinecap="round" aria-hidden="true">
            <path d="M6 1.200v9.600M1.200 6h9.600" />
          </svg>
        </button>
        <button aria-label="Zoom out" className="flex h-[29px] items-center justify-center">
          <svg viewBox="0 0 12 12" className="size-3" stroke="#333" strokeWidth="2.400" strokeLinecap="round" aria-hidden="true">
            <path d="M1.200 6h9.600" />
          </svg>
        </button>
        <button aria-label="Reset bearing" className="flex h-[29px] items-center justify-center">
          <svg viewBox="0 0 8 17" className="h-[17px] w-2" aria-hidden="true">
            <path d="M4 0l4 8H0z" fill="#333" />
            <path d="M4 17l4-7H0z" fill="#ccc" />
          </svg>
        </button>
      </div>
    </section>
  );
}

/* ---------- page ---------- */

export default function App() {
  return (
    <div className="flex h-screen overflow-hidden bg-linear-to-b from-[#1e2431] to-[#353952] font-[Roboto,sans-serif] text-black">
      <Sidebar />
      <main className="my-3 mr-3 flex min-w-0 flex-1 flex-col overflow-hidden rounded bg-white">
        <header className="flex h-[53px] shrink-0 items-center border-b border-[#e3e3f1] px-[14px] pb-0.5 text-[15px] font-medium">
          <button className="flex items-center gap-1">
            Home
            <svg viewBox="0 0 8 5" className="h-[5px] w-2" fill="none" stroke="#8a8fa8" aria-hidden="true">
              <path d="M.6.6L4 4.200 7.400.6" />
            </svg>
          </button>
          <svg viewBox="0 0 11 7" className="mx-3 ml-4 h-[7px] w-[11px]" fill="#6a7092" aria-hidden="true">
            <path d="M0 2.900h5.500V.3L10.800 3.500 5.500 6.700V4.100H0z" />
          </svg>
          <h1>Dashboard</h1>
        </header>
        <div className="flex min-h-0 flex-1 flex-col gap-[18px] overflow-hidden pt-[17px] pr-[17px] pl-[18px]">
          <div className="grid shrink-0 grid-cols-[3fr_2fr_2fr] gap-[18px]">
            <div className="flex min-w-0 flex-col gap-[18px]">
              <SystemHealth />
              <div className="grid grid-cols-3 gap-[18px]">
                {stats.map((stat) => (
                  <StatTile key={stat.title} stat={stat} />
                ))}
              </div>
              <Billing />
            </div>
            <RecentIssues />
            <OrganizationActivity />
          </div>
          <DeviceMap />
        </div>
      </main>
      <div className="fixed bottom-0 left-0 flex h-[21px] items-center rounded-tr bg-[#161d14] px-[5px] font-['Noto_Sans'] text-[11px] text-[#c9d6bd]">
        https://qa-studio.telemetryos.com
      </div>
    </div>
  );
}
